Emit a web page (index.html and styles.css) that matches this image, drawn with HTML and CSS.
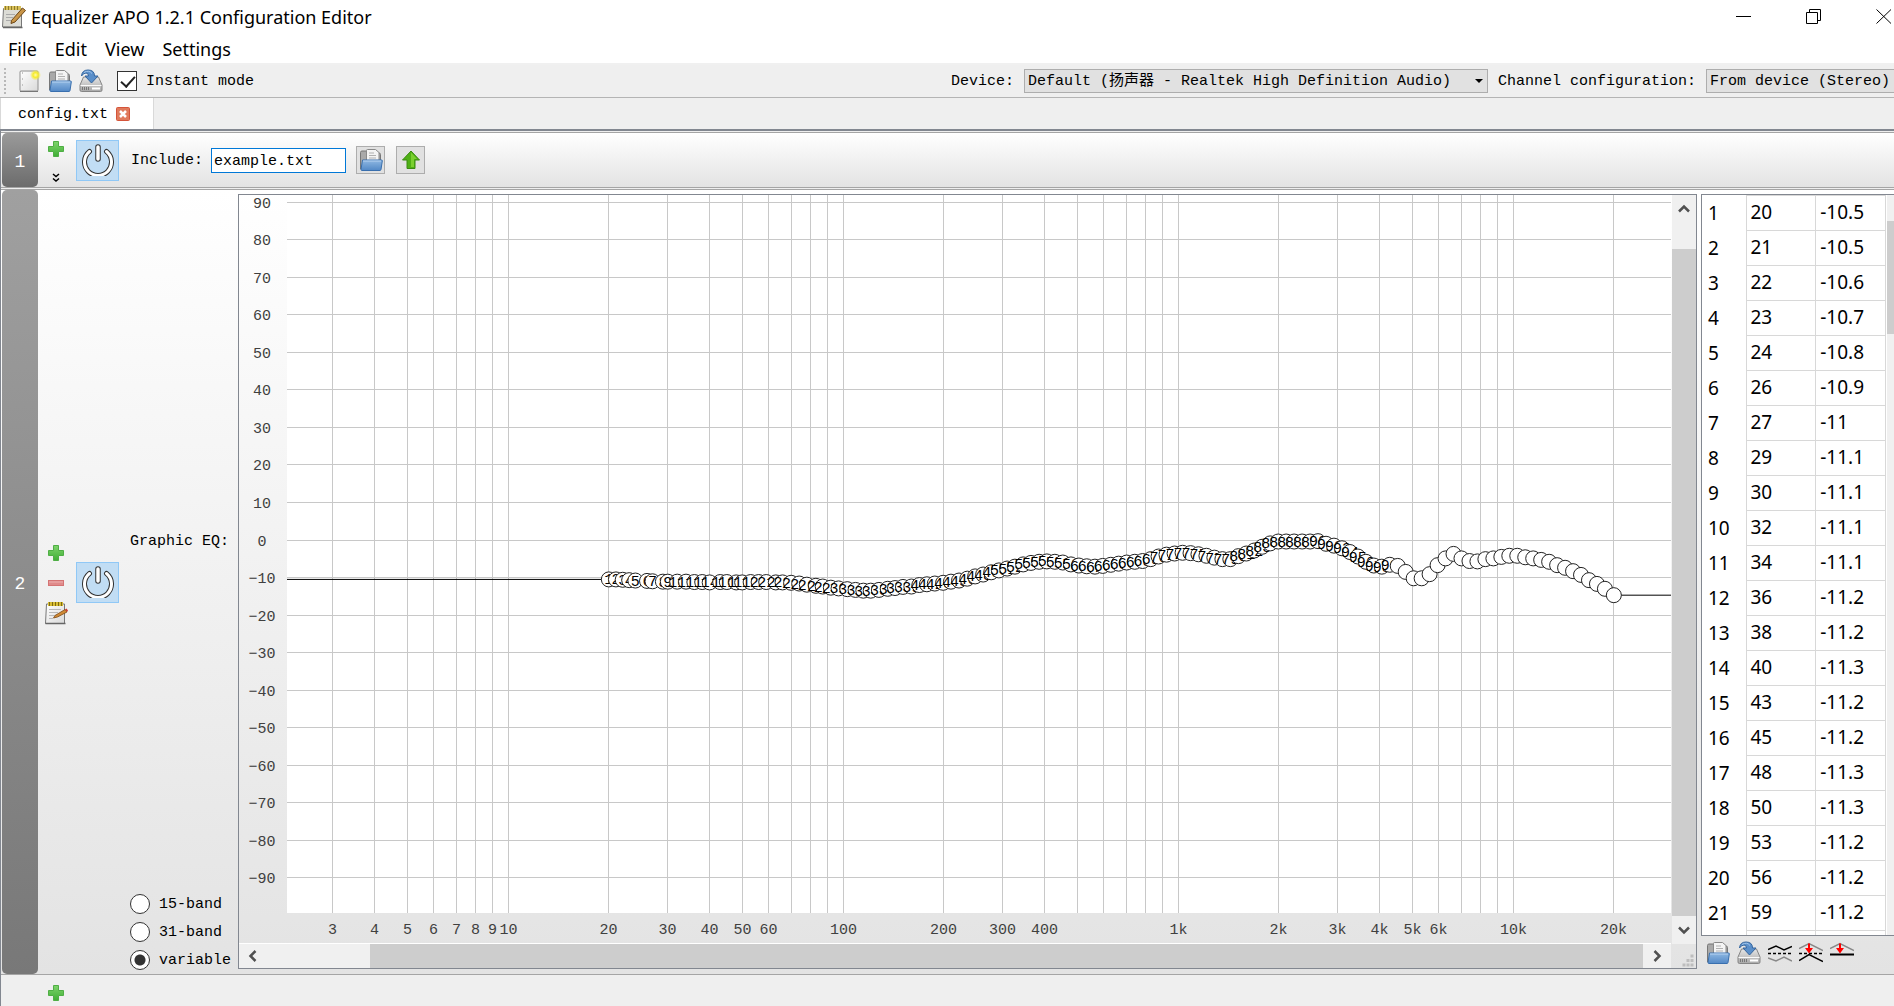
FILE: index.html
```html
<!DOCTYPE html>
<html lang="en">
<head>
<meta charset="utf-8">
<title>Equalizer APO 1.2.1 Configuration Editor</title>
<link rel="stylesheet" href="styles.css">
</head>
<body>
<svg class="defs" aria-hidden="true">
  <defs>
    <linearGradient id="g-green" x1="0" y1="0" x2="0" y2="1"><stop offset="0" stop-color="#7fd46c"/><stop offset="1" stop-color="#3fae35"/></linearGradient>
    <linearGradient id="g-blue" x1="0" y1="0" x2="0" y2="1"><stop offset="0" stop-color="#8fb8e2"/><stop offset="1" stop-color="#5288c6"/></linearGradient>
    <linearGradient id="g-paper" x1="0" y1="0" x2="1" y2="1"><stop offset="0" stop-color="#ffffff"/><stop offset="1" stop-color="#d9d9d9"/></linearGradient>
    <linearGradient id="g-metal" x1="0" y1="0" x2="0" y2="1"><stop offset="0" stop-color="#e6e6e6"/><stop offset="1" stop-color="#a8a8a8"/></linearGradient>
    <radialGradient id="g-glow"><stop offset="0" stop-color="#fffbb0"/><stop offset="0.45" stop-color="#f7ec2c"/><stop offset="1" stop-color="#f7ec2c" stop-opacity="0"/></radialGradient>
  </defs>
  <symbol id="i-new" viewBox="0 0 24 24">
    <rect x="3" y="2" width="18" height="20" rx="1" fill="url(#g-paper)" stroke="#909090"/>
    <path d="M5.500 3v18" stroke="#c4c4c4" stroke-dasharray="2 4"/>
    <path d="M3 22.500h18" stroke="#777"/>
    <circle cx="18.500" cy="6" r="5.500" fill="url(#g-glow)"/>
  </symbol>
  <symbol id="i-open" viewBox="0 0 24 24">
    <path d="M1.500 21V4.500q0-1.500 1.500-1.500h5l1.500 2H20q1.500 0 1.500 1.500V21z" fill="#a9a9a9" stroke="#777"/>
    <path d="M7.500 15V2.500q0-1 1-1h8l3.500 3V15z" fill="#f4f4f4" stroke="#8a8a8a"/>
    <path d="M10 5h5M10 7.500h7M10 10h7" stroke="#b0b0b0"/>
    <path d="M3.500 12h19q1 0 .8 1l-1.300 8.500q-.2 1-1 1H3q-1 0-1-1z" fill="url(#g-blue)" stroke="#396fae"/>
    <path d="M4 13h18" stroke="#b5d2f0"/>
  </symbol>
  <symbol id="i-save" viewBox="0 0 24 24">
    <path d="M4.500 8h15l3.500 8v5q0 1.500-1.500 1.500h-19Q1 22.500 1 21v-5z" fill="url(#g-metal)" stroke="#858585"/>
    <path d="M1.500 16.500h21" stroke="#fafafa"/>
    <path d="M3.500 18v3M5.500 18v3M7.500 18v3M9.500 18v3" stroke="#777"/>
    <path d="M13 19.500h8" stroke="#fff" stroke-width="2"/>
    <path d="M2.500 7Q3 1 9 1q6.500 0 6.500 6H19l-6.500 7L6 7h3.500q0-3-2.500-3-2.500 0-4.500 3z" fill="#5a8fca" stroke="#34659e"/>
    <path d="M5 3.500q5-3 8 1" fill="none" stroke="#a6c8ec"/>
  </symbol>
  <symbol id="i-note" viewBox="0 0 24 24">
    <path d="M2.500 3h18v19.500h-19z" fill="url(#g-paper)" stroke="#777"/>
    <path d="M1.500 22.500h20" stroke="#666" stroke-width="1.500"/>
    <rect x="4" y="1" width="15" height="4" fill="#d8bd35"/>
    <path d="M5.500 1v4M8.500 1v4M11.500 1v4M14.500 1v4M17.500 1v4" stroke="#7d6b12"/>
    <path d="M5 8.500h12M5 11.500h9M5 14.500h6M5 17.500h4" stroke="#b9b9b9"/>
    <path d="M11 14.500 21 8.500l2 2.500-9.500 5-4 1z" fill="#d08a35" stroke="#7b4714" stroke-width=".8"/>
    <path d="M21 8.500l1.500-1 1.500 2-1 1.500z" fill="#cf3b30"/>
  </symbol>
  <symbol id="i-app" viewBox="0 0 24 24">
    <path d="M1.500 3.500h18v18.500h-19z" fill="#dcdcd6" stroke="#777"/>
    <path d="M1 22.500h19.500" stroke="#666" stroke-width="1.500"/>
    <rect x="2" y="1" width="17" height="4" fill="#d8c05a"/>
    <path d="M3.500 1v4M6.500 1v4M9.500 1v4M12.500 1v4M15.500 1v4" stroke="#8d7a2c"/>
    <path d="M4 9.500h9M4 12.500h7M4 15.500h5" stroke="#aaa"/>
    <path d="M9.500 15.500 20.500 3l3 2.500L13 17l-4 1.500z" fill="#c89548" stroke="#6d4716"/>
  </symbol>
  <symbol id="i-plus" viewBox="0 0 16 16">
    <path d="M5.500 .5h5v5h5v5h-5v5h-5v-5h-5v-5h5z" fill="url(#g-green)" stroke="#4fae45"/>
  </symbol>
  <symbol id="i-minus" viewBox="0 0 16 16">
    <rect x=".5" y="5.500" width="15" height="5" fill="#e08a8a" stroke="#d47474"/>
    <path d="M1 7h14" stroke="#edb0b0"/>
  </symbol>
  <symbol id="i-up" viewBox="0 0 18 20">
    <path d="M9 1l8.500 9H13v8.500H5V10H.5z" fill="#4fb015" stroke="#3a8a10"/>
    <path d="M9 2.500l6 6.500h-3v8H9z" fill="#7ad02f"/>
  </symbol>
  <symbol id="i-power" viewBox="0 0 32 32">
    <path d="M7.500 7.500a13.500 13.500 0 1 0 17 0" fill="none" stroke="#333" stroke-width="5" stroke-linecap="round"/>
    <path d="M7.500 7.500a13.500 13.500 0 1 0 17 0" fill="none" stroke="#fff" stroke-width="3" stroke-linecap="round"/>
    <path d="M16 3v12" stroke="#333" stroke-width="5.500" stroke-linecap="round"/>
    <path d="M16 3v12" stroke="#fff" stroke-width="3.500" stroke-linecap="round"/>
  </symbol>
  <symbol id="i-invert" viewBox="0 0 24 24">
    <path d="M0 8.500 8 5l8 4 8-3.500" fill="none" stroke="#000" stroke-width="1.500"/>
    <path d="M0 12.500h24" stroke="#000" stroke-width="1.500" stroke-dasharray="3 2"/>
    <path d="M0 17 8 20l8-4 8 4" fill="none" stroke="#888" stroke-width="1.500"/>
  </symbol>
  <symbol id="i-normalize" viewBox="0 0 24 24">
    <path d="M0 7.500 10 2.500l14 7" fill="none" stroke="#888" stroke-width="1.500"/>
    <path d="M0 12.500h24" stroke="#000" stroke-width="1.500" stroke-dasharray="3 2"/>
    <path d="M0 19.500 10 13.500l14 7" fill="none" stroke="#000" stroke-width="1.500"/>
    <path d="M10 2.500v6" stroke="red" stroke-width="2"/><path d="M6 7h8l-4 5.500z" fill="red"/>
  </symbol>
  <symbol id="i-reset" viewBox="0 0 24 24">
    <path d="M0 7.500 10 2.500l14 7" fill="none" stroke="#888" stroke-width="1.500"/>
    <path d="M0 13.500h24" stroke="#000" stroke-width="2"/>
    <path d="M10 2.500v6" stroke="red" stroke-width="2"/><path d="M6 7h8l-4 5.500z" fill="red"/>
  </symbol>
  <symbol id="i-chevron" viewBox="0 0 12 12">
    <path d="M1 8.500l5-5 5 5" fill="none" stroke="#505050" stroke-width="2.500"/>
  </symbol>
</svg>

<header class="titlebar">
  <svg class="icon"><use href="#i-app"/></svg>
  <h1 class="title">Equalizer APO 1.2.1 Configuration Editor</h1>
  <div class="window-buttons">
    <button type="button" aria-label="Minimize"><svg viewBox="0 0 16 16"><path d="M0 7.500h15"/></svg></button>
    <button type="button" aria-label="Restore"><svg viewBox="0 0 16 16"><path d="M.5 3.500h11v11H.5zM3.500 3V.5h11v11H12"/></svg></button>
    <button type="button" aria-label="Close"><svg viewBox="0 0 16 16"><path d="M.5 .5l14.500 14M15 .5l-14.500 14"/></svg></button>
  </div>
</header>

<nav class="menubar">
  <button type="button">File</button>
  <button type="button">Edit</button>
  <button type="button">View</button>
  <button type="button">Settings</button>
</nav>

<div class="toolbar">
  <span class="grip"></span>
  <button type="button" class="tool" aria-label="New"><svg class="icon"><use href="#i-new"/></svg></button>
  <button type="button" class="tool" aria-label="Open"><svg class="icon"><use href="#i-open"/></svg></button>
  <button type="button" class="tool" aria-label="Save"><svg class="icon"><use href="#i-save"/></svg></button>
  <label class="check"><input type="checkbox" checked><span class="caption">Instant mode</span></label>
  <div class="toolbar-right">
    <label for="device" class="caption">Device:</label>
    <span class="dropdown">
      <select id="device" class="device"><option>Default (扬声器 - Realtek High Definition Audio)</option></select>
    </span>
    <label for="channels" class="caption">Channel configuration:</label>
    <select id="channels" class="channels"><option>From device (Stereo)</option></select>
  </div>
</div>

<div class="tabs">
  <div class="tab"><span class="caption">config.txt</span>
    <button type="button" class="tab-close" aria-label="Close tab"><svg viewBox="0 0 14 14"><rect x=".5" y=".5" width="13" height="13" rx="1" fill="#e07a5c" stroke="#d5543a"/><path d="M4 4l6 6M10 4l-6 6" stroke="#fff" stroke-width="2.500"/></svg></button>
  </div>
</div>

<main class="config">
  <section class="row">
    <div class="row-number">1</div>
    <div class="row-actions include-actions">
      <button type="button" aria-label="Add"><svg class="small"><use href="#i-plus"/></svg></button>
      <button type="button" aria-label="More"><svg class="more" viewBox="0 0 8 10"><path d="M1 1l3 2.500L7 1M1 5.500l3 2.500L7 5.500" fill="none" stroke="#000" stroke-width="1.500"/></svg></button>
    </div>
    <button type="button" class="power" aria-label="Enabled"><svg><use href="#i-power"/></svg></button>
    <label for="include" class="include-label caption">Include:</label>
    <input id="include" class="include" type="text" value="example.txt" autofocus>
    <button type="button" class="square" aria-label="Browse"><svg class="icon"><use href="#i-open"/></svg></button>
    <button type="button" class="square" aria-label="Open file"><svg class="arrow"><use href="#i-up"/></svg></button>
  </section>

  <section class="row row-eq">
    <div class="row-number">2</div>
    <div class="row-actions eq-actions">
      <button type="button" aria-label="Add"><svg class="small"><use href="#i-plus"/></svg></button>
      <button type="button" aria-label="Remove"><svg class="small"><use href="#i-minus"/></svg></button>
      <button type="button" aria-label="Edit"><svg class="icon"><use href="#i-note"/></svg></button>
    </div>
    <button type="button" class="power" aria-label="Enabled"><svg><use href="#i-power"/></svg></button>
    <div class="bands">
      <span class="bands-title">Graphic EQ:</span>
      <div class="band-options">
        <label><input type="radio" name="band"><span class="caption">15-band</span></label>
        <label><input type="radio" name="band"><span class="caption">31-band</span></label>
        <label><input type="radio" name="band" checked><span class="caption">variable</span></label>
      </div>
    </div>
    <div class="graph">
      <svg id="gain-axis" class="gain-axis"></svg>
      <svg id="plot" class="plot"></svg>
      <svg id="freq-axis" class="freq-axis"></svg>
      <div class="scroll-v">
        <button type="button" aria-label="Scroll up"><svg><use href="#i-chevron"/></svg></button>
        <span class="thumb"></span>
        <button type="button" class="down" aria-label="Scroll down"><svg><use href="#i-chevron"/></svg></button>
      </div>
      <div class="scroll-h">
        <button type="button" class="left" aria-label="Scroll left"><svg><use href="#i-chevron"/></svg></button>
        <span class="thumb"></span>
        <button type="button" class="right" aria-label="Scroll right"><svg><use href="#i-chevron"/></svg></button>
      </div>
      <svg class="size-grip" viewBox="0 0 25 24"><path d="M19.500 12h3M15.500 16.500h3M19.500 16.500h3M11.500 21h3M15.500 21h3M19.500 21h3" stroke="#bdbdbd" stroke-width="3"/></svg>
    </div>
    <div class="side">
      <div class="table-box">
        <table class="points"><tbody id="points"></tbody></table>
        <div class="table-scroll"><span></span></div>
      </div>
      <div class="side-tools">
        <button type="button" aria-label="Import"><svg class="icon"><use href="#i-open"/></svg></button>
        <button type="button" aria-label="Export"><svg class="icon"><use href="#i-save"/></svg></button>
        <button type="button" aria-label="Invert response"><svg class="icon"><use href="#i-invert"/></svg></button>
        <button type="button" aria-label="Normalize response"><svg class="icon"><use href="#i-normalize"/></svg></button>
        <button type="button" aria-label="Reset response"><svg class="icon"><use href="#i-reset"/></svg></button>
      </div>
    </div>
  </section>

  <footer class="add-row">
    <button type="button" aria-label="Add"><svg class="small"><use href="#i-plus"/></svg></button>
  </footer>
</main>
<script src="graph.js"></script>
</body>
</html>
```

FILE: styles.css
```css
* { box-sizing: border-box; }

:root {
  --mono: "Liberation Mono", "Noto Sans CJK SC", monospace;
  --ui: "Noto Sans", sans-serif;
  --frame: #828790;
  --rule: #b4b4b4;
}

body {
  margin: 0;
  height: 100vh;
  display: flex;
  flex-direction: column;
  overflow: hidden;
  background: #efefef;
  color: #000;
  font: 15px/20px var(--mono);
}

button {
  margin: 0;
  padding: 0;
  border: 0;
  background: none;
  color: inherit;
  font: inherit;
  display: flex;
  align-items: center;
  justify-content: center;
}

.defs { position: absolute; width: 0; height: 0; }
.icon { width: 24px; height: 24px; display: block; }
.small { width: 16px; height: 16px; display: block; }
.caption { padding-top: 2px; }

/* Title bar and menus */
.titlebar {
  flex: none;
  display: flex;
  align-items: center;
  height: 34px;
  padding: 0 2px;
  gap: 5px;
  background: #fff;
}
.title { margin: 0; font: 18px/24px var(--ui); }
.window-buttons { margin-left: auto; display: flex; gap: 54px; }
.window-buttons svg { width: 16px; height: 16px; fill: none; stroke: #000; }

.menubar {
  flex: none;
  display: flex;
  gap: 18px;
  height: 31px;
  padding: 0 8px;
  background: #fff;
  border-bottom: 2px solid #f0f0f0;
  font: 18px/28px var(--ui);
}

/* Toolbar */
.toolbar {
  flex: none;
  display: flex;
  align-items: center;
  height: 33px;
  padding-left: 4px;
  border-bottom: 1px solid var(--rule);
  white-space: nowrap;
}
.grip { width: 2px; height: 26px; margin-right: 11px; background: repeating-linear-gradient(#b8b8b8 0 2px, transparent 2px 4px); }
.tool { width: 24px; margin-right: 7px; }
.check { display: flex; align-items: center; gap: 9px; margin-left: 7px; }
input[type="checkbox"], input[type="radio"] {
  appearance: none;
  margin: 0;
  width: 20px;
  height: 20px;
  border: 1px solid #333;
  background: #fff;
}
input[type="checkbox"]:checked::after {
  content: "";
  display: block;
  width: 6px;
  height: 12px;
  margin: 1px 0 0 6px;
  border: solid #222;
  border-width: 0 2px 2px 0;
  transform: rotate(42deg);
}
input[type="radio"] { border-radius: 50%; }
input[type="radio"]:checked { background: radial-gradient(#333 5px, #fff 6px); }

.toolbar-right { display: flex; align-items: center; gap: 10px; margin-left: auto; }
select {
  appearance: none;
  height: 24px;
  padding: 2px 0 0 3px;
  border: 1px solid #adadad;
  border-radius: 0;
  background: #e1e1e1;
  color: #000;
  font: inherit;
}
.dropdown { position: relative; display: flex; }
.dropdown::after {
  content: "";
  position: absolute;
  right: 5px;
  top: 10px;
  border: solid transparent;
  border-width: 4px 4px 0;
  border-top-color: #000;
}
.device { width: 464px; }
.channels { width: 188px; border-right: 0; }

/* Tabs */
.tabs { flex: none; height: 33px; display: flex; border-bottom: 2px solid var(--frame); }
.tab {
  display: flex;
  align-items: center;
  gap: 8px;
  width: 154px;
  padding-left: 17px;
  background: #fff;
  border: 1px solid #d9d9d9;
  border-width: 0 1px;
}
.tab-close svg { width: 14px; height: 14px; }

/* Configuration rows */
.config {
  flex: 1;
  min-height: 0;
  display: flex;
  flex-direction: column;
  padding-top: 1px;
  border-left: 1px solid var(--frame);
}
.row {
  flex: none;
  display: flex;
  align-items: center;
  height: 56px;
  padding-left: 1px;
  margin-bottom: 1px;
  border: 1px solid #a5a5a5;
  border-width: 1px 0;
  background: linear-gradient(#fff, #e3e3e3);
}
.row-eq { flex: 1; min-height: 0; margin-bottom: 0; }
.row-number {
  align-self: stretch;
  width: 36px;
  display: flex;
  align-items: center;
  justify-content: center;
  padding-top: 3px;
  border-radius: 5px;
  background: linear-gradient(#9a9a9a, #6c6c6c);
  color: #fff;
  font-size: 18px;
}
.row-eq .row-number { background: linear-gradient(#a0a0a0, #787878); }
.row-actions { width: 38px; padding-right: 2px; display: flex; flex-direction: column; align-items: center; }
.include-actions { gap: 16px; padding-top: 4px; }
.eq-actions { gap: 14px; padding-top: 5px; }
.eq-actions button:last-child { margin-top: -4px; }
.more { width: 8px; height: 10px; }
.power { width: 43px; height: 41px; background: #c1ddf4; border: 1px solid #90c8f6; }
.power svg { width: 32px; height: 32px; }
.include-label { margin: 0 8px 0 12px; }
.include {
  width: 135px;
  height: 25px;
  margin: 0 10px 0 0;
  padding: 2px 2px 0;
  border: 1px solid #0078d7;
  outline: 0;
  background: #fff;
  font: inherit;
}
.square { width: 29px; height: 28px; margin-right: 11px; border: 1px solid #adadad; background: #e1e1e1; }
.arrow { width: 18px; height: 20px; }

.bands {
  align-self: stretch;
  width: 119px;
  display: grid;
  grid-template-rows: 1fr auto 1fr;
  padding: 0 0 4px 11px;
}
.bands-title { grid-row: 2; margin-bottom: 76px; }
.band-options { grid-row: 3; align-self: end; display: flex; flex-direction: column; gap: 8px; }
.band-options label { display: flex; align-items: center; gap: 9px; height: 20px; }

/* Graph */
.graph {
  align-self: stretch;
  flex: 1;
  min-width: 0;
  margin: 4px 4px 5px 0;
  display: grid;
  grid-template-columns: 48px 1fr 25px;
  grid-template-rows: 1fr 31px 24px;
  border: 1px solid var(--frame);
}
.gain-axis { grid-area: 1 / 1; width: 100%; height: 100%; }
.plot { grid-area: 1 / 2; width: 100%; height: 100%; background: #fff; }
.freq-axis { grid-area: 2 / 1 / 3 / 3; width: 100%; height: 100%; border-bottom: 1px solid #fff; }
.axis-text { fill: #404040; text-anchor: middle; }
.grid-line { stroke: #c8c8c8; shape-rendering: crispEdges; }
.response { fill: none; stroke: #000; }
.node circle { fill: #fff; stroke: #222; }
.node text { fill: #000; text-anchor: middle; }

.scroll-v {
  grid-area: 1 / 3 / 3 / 4;
  margin-left: 1px;
  display: flex;
  flex-direction: column;
  background: #f0f0f0;
}
.scroll-v button { height: 28px; }
.scroll-v .thumb { flex: 1; margin-top: 26px; background: #cdcdcd; }
.scroll-h { grid-area: 3 / 1 / 4 / 3; display: flex; background: #f0f0f0; }
.scroll-h button { width: 28px; }
.scroll-h .thumb { flex: 1; margin-left: 103px; background: #cdcdcd; }
.scroll-v svg, .scroll-h svg { width: 12px; height: 12px; }
.down svg { transform: rotate(180deg); }
.left svg { transform: rotate(-90deg); }
.right svg { transform: rotate(90deg); }
.size-grip { grid-area: 3 / 3; width: 25px; height: 24px; }

/* Point table */
.side {
  align-self: stretch;
  flex: none;
  width: 193px;
  margin-top: 4px;
  display: flex;
  flex-direction: column;
}
.table-box {
  flex: 1;
  min-height: 0;
  display: flex;
  justify-content: space-between;
  overflow: hidden;
  border: 1px solid var(--frame);
  border-right: 0;
  background: #fff;
}
.points { flex: none; align-self: flex-start; border-collapse: collapse; font: 19px/24px var(--ui); table-layout: fixed; width: 184px; }
.points tr { height: 35px; }
.points th { width: 44px; padding: 0 0 1px 6px; font-weight: 400; text-align: left; }
.points td { padding: 0 0 3px 4px; border: 1px solid #d8d8d8; }
.table-scroll { width: 7px; padding-top: 26px; background: #f0f0f0; }
.table-scroll span { display: block; height: 113px; background: #cdcdcd; }
.side-tools { flex: none; display: flex; gap: 7px; padding: 5px 5px 9px; }

.add-row { flex: none; height: 31px; display: flex; align-items: center; padding: 4px 0 0 47px; }
```

FILE: graph.js
```js
const freqs = [20,21,22,23,24,26,27,29,30,32,34,36,38,40,43,45,48,50,53,56,59,63,66,70,74,78,83,87,92,97,103,109,115,121,128,136,143,151,160,169,178,188,199,210,222,235,248,262,277,292,309,326,345,364,385,406,429,453,479,506,534,565,596,630,665,703,743,784,829,875,924,977,1032,1090,1151,1216,1284,1357,1433,1514,1599,1689,1784,1885,1991,2103,2221,2347,2479,2618,2766,2921,3086,3260,3443,3637,3842,4058,4287,4528,4783,5052,5337,5637,5955,6290,6644,7018,7414,7831,8272,8738,9230,9749,10298,10878,11490,12137,12821,13543,14305,15110,15961,16860,17809,18812,20000];
const gains = [-10.5,-10.5,-10.6,-10.7,-10.8,-10.9,-11,-11.1,-11.1,-11.1,-11.1,-11.2,-11.2,-11.3,-11.2,-11.2,-11.3,-11.3,-11.2,-11.2,-11.2,-11.3,-11.3,-11.4,-11.6,-11.9,-12.2,-12.4,-12.7,-12.9,-13.1,-13.3,-13.5,-13.5,-13.3,-13,-12.8,-12.5,-12.4,-12,-11.8,-11.6,-11.4,-11.1,-10.8,-10.3,-9.7,-9.2,-8.6,-8.1,-7.6,-7.1,-6.5,-6.1,-5.8,-5.7,-5.8,-6,-6.5,-6.8,-7,-7.1,-6.9,-6.6,-6.3,-6,-5.8,-5.6,-5.1,-4.4,-3.9,-3.6,-3.4,-3.5,-3.8,-4.2,-4.7,-5.1,-5.1,-4.3,-3.6,-2.8,-1.8,-0.9,-0.4,-0.4,-0.4,-0.4,-0.4,-0.3,-1,-1.5,-2.2,-3.2,-4.4,-5.8,-6.8,-7.1,-6.6,-6.9,-8.5,-10.2,-10.2,-9.1,-6.7,-4.9,-3.7,-4.9,-5.6,-5.7,-5.1,-4.9,-4.5,-4.2,-4.2,-4.6,-4.9,-5.3,-5.8,-6.7,-7.4,-8.3,-9.3,-10.7,-11.7,-13,-14.7];

const NS = "http://www.w3.org/2000/svg";
const AXIS = 48;      // width of the gain axis
const DECADE = 335;   // pixels for a factor of ten in frequency
const xOf = f => 221 + DECADE * Math.log10(f / 10);
const yOf = g => 345.02 - 3.752 * g;

function add(parent, name, attrs, text) {
  const el = document.createElementNS(NS, name);
  for (const k in attrs) el.setAttribute(k, attrs[k]);
  if (text !== undefined) el.textContent = text;
  parent.append(el);
  return el;
}

const plot = document.getElementById("plot");
const gainAxis = document.getElementById("gain-axis");
const freqAxis = document.getElementById("freq-axis");

for (let g = 90; g >= -90; g -= 10) {
  const y = Math.floor(yOf(g)) + 0.5;
  add(plot, "line", { class: "grid-line", x1: 0, x2: "100%", y1: y, y2: y });
  add(gainAxis, "text", { class: "axis-text", x: 23, y: y + 5 }, String(g).replace("-", "\u2212"));
}

const labelled = new Set([3,4,5,6,7,8,9,10,20,30,40,50,60,100,200,300,400,1000,2000,3000,4000,5000,6000,10000,20000]);
for (let base = 1; base <= 10000; base *= 10) {
  for (let m = 1; m < 10; m++) {
    const f = base * m;
    if (f < 3 || f > 20000) continue;
    const x = Math.floor(xOf(f)) + 0.5;
    add(plot, "line", { class: "grid-line", x1: x, x2: x, y1: 0, y2: "100%" });
    if (labelled.has(f)) add(freqAxis, "text", { class: "axis-text", x: x + AXIS, y: 21 }, f >= 1000 ? f / 1000 + "k" : f);
  }
}

const pts = freqs.map((f, i) => [xOf(f), yOf(gains[i])]);
add(plot, "path", { class: "response", d: "M0 " + pts[0][1] + "L" + pts.map(p => p.join(" ")).join("L") + "H" + 5000 });
pts.forEach(([x, y], i) => {
  const node = add(plot, "g", { class: "node" });
  add(node, "circle", { cx: x, cy: y, r: 7.5 });
  if (i < 99) add(node, "text", { x, y: y + 5 }, i + 1);
});

document.getElementById("points").innerHTML = freqs.slice(0, 22)
  .map((f, i) => `<tr><th scope="row">${i + 1}</th><td>${f}</td><td>${gains[i]}</td></tr>`).join("");

const include = document.getElementById("include");
include.focus();
include.setSelectionRange(include.value.length, include.value.length);
```
